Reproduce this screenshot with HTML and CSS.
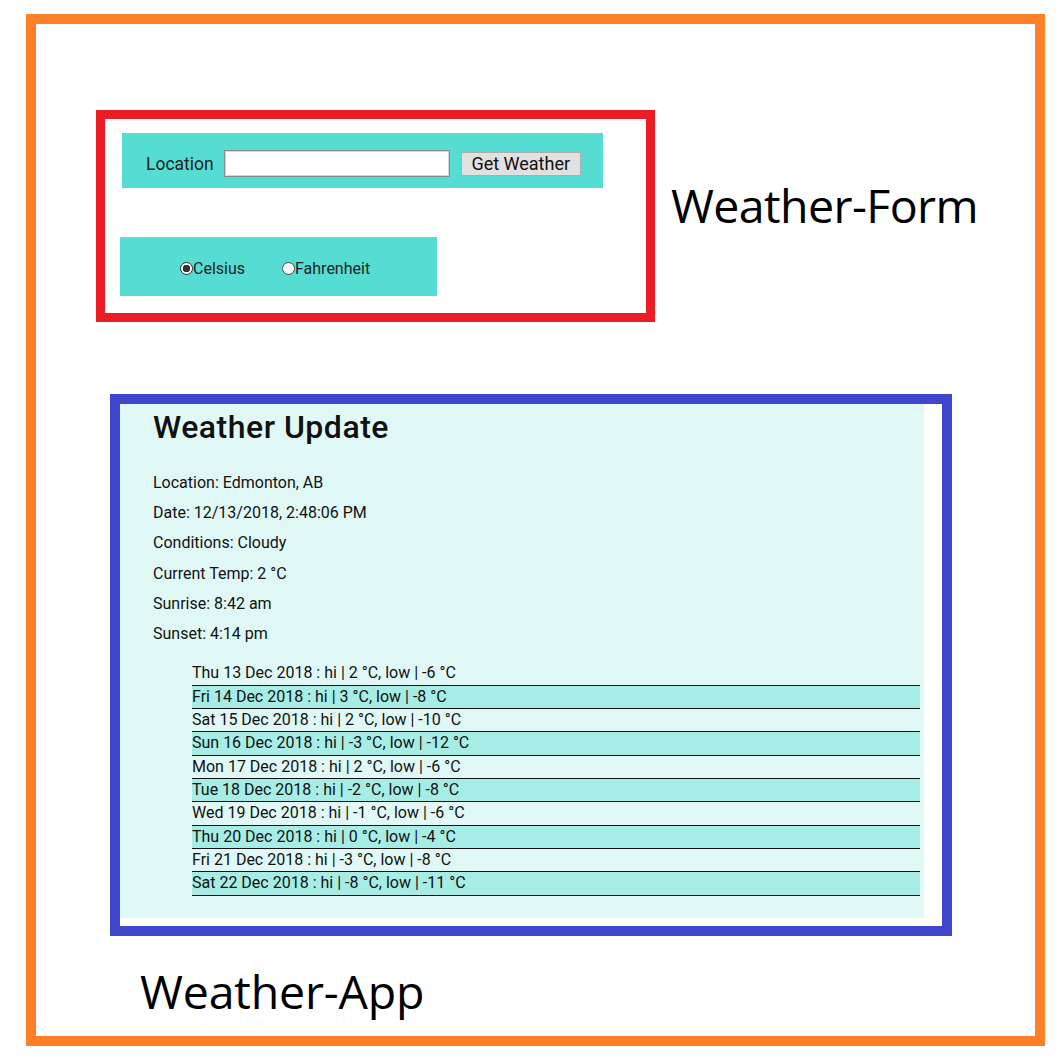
FILE: index.html
```html
<!DOCTYPE html>
<html lang="en">
<head>
<meta charset="utf-8">
<title>Weather App diagram</title>
<link rel="stylesheet" href="styles.css">
</head>
<body>
<div class="frame">
  <div class="form-row">
    <div class="form-box">
      <form class="loc-bar">
        <label class="loc-label" for="loc">Location</label>
        <input class="loc-input" id="loc" type="text">
        <button class="get-btn" type="button">Get Weather</button>
      </form>
      <div class="units-bar">
        <label class="unit"><input class="radio" type="radio" name="u" checked>Celsius</label>
        <label class="unit"><input class="radio" type="radio" name="u">Fahrenheit</label>
      </div>
    </div>
    <div class="caption caption-form">Weather-Form</div>
  </div>

  <div class="app-box">
    <div class="panel">
      <h2 class="title">Weather Update</h2>
      <div class="details">
        <div class="line">Location: Edmonton, AB</div>
        <div class="line">Date: 12/13/2018, 2:48:06 PM</div>
        <div class="line">Conditions: Cloudy</div>
        <div class="line">Current Temp: 2 °C</div>
        <div class="line">Sunrise: 8:42 am</div>
        <div class="line">Sunset: 4:14 pm</div>
      </div>
      <ul class="forecast">
        <li>Thu 13 Dec 2018 : hi | 2 °C, low | -6 °C</li>
        <li>Fri 14 Dec 2018 : hi | 3 °C, low | -8 °C</li>
        <li>Sat 15 Dec 2018 : hi | 2 °C, low | -10 °C</li>
        <li>Sun 16 Dec 2018 : hi | -3 °C, low | -12 °C</li>
        <li>Mon 17 Dec 2018 : hi | 2 °C, low | -6 °C</li>
        <li>Tue 18 Dec 2018 : hi | -2 °C, low | -8 °C</li>
        <li>Wed 19 Dec 2018 : hi | -1 °C, low | -6 °C</li>
        <li>Thu 20 Dec 2018 : hi | 0 °C, low | -4 °C</li>
        <li>Fri 21 Dec 2018 : hi | -3 °C, low | -8 °C</li>
        <li>Sat 22 Dec 2018 : hi | -8 °C, low | -11 °C</li>
      </ul>
    </div>
  </div>

  <div class="caption caption-app">Weather-App</div>
</div>
</body>
</html>
```

FILE: styles.css
```css
* { box-sizing: border-box; }

html, body {
  margin: 0;
  padding: 0;
  background: #ffffff;
}

body {
  font-family: Roboto, "Liberation Sans", sans-serif;
  color: #111;
}

.frame {
  margin: 14px 0 0 26px;
  width: 1019px;
  height: 1032px;
  border: 10px solid #fe7f27;
  display: flex;
  flex-direction: column;
  align-items: flex-start;
}

.form-row {
  display: flex;
  align-items: flex-start;
  margin: 86px 0 0 60px;
}

.form-box {
  width: 559px;
  height: 212px;
  border: 9px solid #ed1c24;
  padding: 14px 0 0 15px;
}

.loc-bar {
  margin: 0 0 0 2px;
  width: 481px;
  height: 55px;
  background: #55ddd3;
  display: flex;
  align-items: center;
  padding: 17px 0 11px 24px;
}

.loc-label {
  font-size: 17.5px;
  color: #222;
  margin-right: 10px;
}

.loc-input {
  width: 226px;
  height: 27px;
  margin: 0 11px 0 0;
  padding: 0;
  border: 1px solid #8a8a8a;
  box-shadow: inset 0 0 0 1px #d6d6d6;
  background: #fff;
}

.get-btn {
  width: 120px;
  height: 24px;
  margin: 0;
  padding: 0;
  background: #e1e1e1;
  border: 1px solid #adadad;
  font-family: Roboto, "Liberation Sans", sans-serif;
  font-size: 18px;
  color: #111;
  line-height: 22px;
}

.units-bar {
  margin-top: 49px;
  width: 317px;
  height: 59px;
  background: #55ddd3;
  display: flex;
  align-items: center;
  padding: 3px 0 0 60px;
  gap: 37px;
}

.unit {
  display: flex;
  align-items: center;
  font-size: 16px;
  color: #222;
}

.radio {
  -webkit-appearance: none;
  appearance: none;
  width: 13px;
  height: 13px;
  margin: 0;
  border: 1px solid #4a4a4a;
  border-radius: 50%;
  background: #fff;
}

.radio:checked {
  background: radial-gradient(circle, #333 0, #333 3.5px, #fff 4px);
  border-color: #333;
}

.caption {
  font-family: "Open Sans", "Noto Sans", sans-serif;
  font-size: 46.5px;
  line-height: 1;
  color: #000;
  letter-spacing: -0.6px;
  white-space: nowrap;
}

.caption-form {
  margin: 72px 0 0 16px;
}

.app-box {
  margin: 72px 0 0 74px;
  width: 842px;
  height: 542px;
  border: 10px solid #3f48cc;
}

.panel {
  width: 804px;
  height: 514px;
  background: #e0f9f6;
  padding: 4.6px 4px 0 33px;
}

.title {
  margin: 0;
  font-size: 32px;
  font-weight: 500;
  letter-spacing: 0.5px;
  line-height: 37.5px;
  color: #111;
}

.details {
  margin-top: 21.7px;
  font-size: 16px;
}

.line {
  line-height: 30.25px;
}

.forecast {
  list-style: none;
  margin: 13px 0 0 0;
  padding: 0 0 0 39px;
  font-size: 16px;
}

.forecast li {
  height: 23.33px;
  line-height: 22.33px;
  border-bottom: 1px solid #111;
  padding-left: 0;
}

.forecast li:nth-child(even) {
  background: #a6ede6;
}

.caption-app {
  margin: 32px 0 0 104px;
  letter-spacing: -0.2px;
}
```
